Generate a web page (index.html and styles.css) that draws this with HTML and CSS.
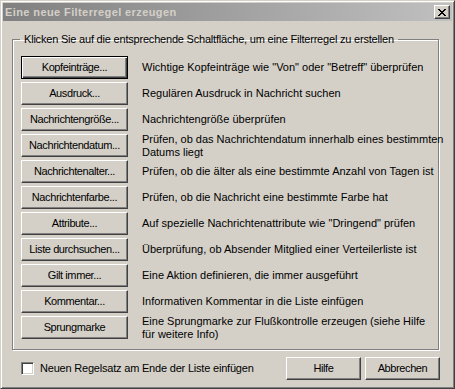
FILE: index.html
```html
<!DOCTYPE html>
<html lang="de">

<head>
    <meta charset="UTF-8">
    <meta name="viewport" content="width=device-width, initial-scale=1.0">
    <link rel="stylesheet" href="styles.css">
    <title>Eine neue Filterregel erzeugen</title>
</head>

<body>

    <div class="window">
        <div class="titlebar">
            <span class="title">Eine neue Filterregel erzeugen</span>
            <button class="close-button" aria-label="Schließen">
                <svg width="8" height="7" viewBox="0 0 8 7" shape-rendering="crispEdges">
                    <rect x="0" y="0" width="2" height="1" />
                    <rect x="6" y="0" width="2" height="1" />
                    <rect x="1" y="1" width="2" height="1" />
                    <rect x="5" y="1" width="2" height="1" />
                    <rect x="2" y="2" width="4" height="1" />
                    <rect x="3" y="3" width="2" height="1" />
                    <rect x="2" y="4" width="4" height="1" />
                    <rect x="1" y="5" width="2" height="1" />
                    <rect x="5" y="5" width="2" height="1" />
                    <rect x="0" y="6" width="2" height="1" />
                    <rect x="6" y="6" width="2" height="1" />
                </svg>
            </button>
        </div>

        <fieldset class="group">
            <legend>Klicken Sie auf die entsprechende Schaltfläche, um eine Filterregel zu erstellen</legend>
            <div class="rules">
                <button class="win-button default">Kopfeinträge...</button>
                <p class="rule-text">Wichtige Kopfeinträge wie "Von" oder "Betreff" überprüfen</p>

                <button class="win-button">Ausdruck...</button>
                <p class="rule-text">Regulären Ausdruck in Nachricht suchen</p>

                <button class="win-button">Nachrichtengröße...</button>
                <p class="rule-text">Nachrichtengröße überprüfen</p>

                <button class="win-button">Nachrichtendatum...</button>
                <p class="rule-text">Prüfen, ob das Nachrichtendatum innerhalb eines bestimmten<br>Datums liegt</p>

                <button class="win-button">Nachrichtenalter...</button>
                <p class="rule-text">Prüfen, ob die älter als eine bestimmte Anzahl von Tagen ist</p>

                <button class="win-button">Nachrichtenfarbe...</button>
                <p class="rule-text">Prüfen, ob die Nachricht eine bestimmte Farbe hat</p>

                <button class="win-button">Attribute...</button>
                <p class="rule-text">Auf spezielle Nachrichtenattribute wie "Dringend" prüfen</p>

                <button class="win-button">Liste durchsuchen...</button>
                <p class="rule-text">Überprüfung, ob Absender Mitglied einer Verteilerliste ist</p>

                <button class="win-button">Gilt immer...</button>
                <p class="rule-text">Eine Aktion definieren, die immer ausgeführt</p>

                <button class="win-button">Kommentar...</button>
                <p class="rule-text">Informativen Kommentar in die Liste einfügen</p>

                <button class="win-button">Sprungmarke</button>
                <p class="rule-text">Eine Sprungmarke zur Flußkontrolle erzeugen (siehe Hilfe<br>für weitere Info)</p>
            </div>
        </fieldset>

        <div class="footer">
            <label class="check">
                <span class="check-box"></span>
                Neuen Regelsatz am Ende der Liste einfügen
            </label>
            <div class="actions">
                <button class="win-button wide">Hilfe</button>
                <button class="win-button wide">Abbrechen</button>
            </div>
        </div>
    </div>

</body>

</html>
```

FILE: styles.css
```css
body {
    margin: 0;
    background-color: #D4D0C8;
    font-family: 'Liberation Sans', Arial, sans-serif;
    font-size: 11px;
    line-height: 13px;
    color: #000;
}

.window {
    width: 455px;
    height: 389px;
    box-sizing: border-box;
    padding: 2px;
    border: 1px solid;
    border-color: #D4D0C8 #404040 #404040 #D4D0C8;
    box-shadow: inset 1px 1px #FFF, inset -1px -1px #808080;
    background-color: #D4D0C8;
    display: flex;
    flex-direction: column;
}

.titlebar {
    height: 18px;
    display: flex;
    align-items: center;
    justify-content: space-between;
    padding: 0 2px 0 2px;
    background: linear-gradient(to right, #808080, #C0C0C0);
}

.title {
    color: #D4D0C8;
    font-weight: bold;
    letter-spacing: 0.4px;
}

.close-button {
    width: 16px;
    height: 14px;
    box-sizing: border-box;
    padding: 0;
    border: 1px solid;
    border-color: #FFF #404040 #404040 #FFF;
    box-shadow: inset -1px -1px #808080;
    background-color: #D4D0C8;
    display: flex;
    align-items: center;
    justify-content: center;
}

.close-button svg {
    display: block;
    fill: #000;
}

.group {
    margin: 12px 13px 0 9px;
    padding: 10px 8px 10px 8px;
    border: 1px solid #808080;
    box-shadow: inset 1px 1px #FFF, 1px 1px #FFF;
    min-width: 0;
}

.group legend {
    margin-left: -1px;
    padding: 0 4px;
    line-height: 13px;
    letter-spacing: -0.2px;
}

.rules {
    display: grid;
    grid-template-columns: 107px 1fr;
    grid-auto-rows: 23px;
    column-gap: 14px;
    row-gap: 3px;
}

.rule-text {
    margin: 0;
    align-self: center;
    white-space: nowrap;
}

.win-button {
    height: 23px;
    box-sizing: border-box;
    padding: 0;
    border: 1px solid;
    border-color: #FFF #404040 #404040 #FFF;
    box-shadow: inset -1px -1px #808080;
    background-color: #D4D0C8;
    font: inherit;
    letter-spacing: -0.4px;
    color: #000;
    text-align: center;
    white-space: nowrap;
}

.win-button.default {
    border-color: #000;
    box-shadow: inset 1px 1px #FFF, inset -1px -1px #404040, inset -2px -2px #808080;
}

.win-button.wide {
    width: 75px;
}

.footer {
    display: flex;
    align-items: center;
    justify-content: space-between;
    margin: 7px 12px 0 18px;
}

.check {
    display: flex;
    align-items: center;
    gap: 6px;
    letter-spacing: -0.2px;
}

.check-box {
    width: 13px;
    height: 13px;
    box-sizing: border-box;
    border: 1px solid;
    border-color: #808080 #FFF #FFF #808080;
    box-shadow: inset 1px 1px #404040, inset -1px -1px #D4D0C8;
    background-color: #FFF;
}

.actions {
    display: flex;
    gap: 4px;
}
```
